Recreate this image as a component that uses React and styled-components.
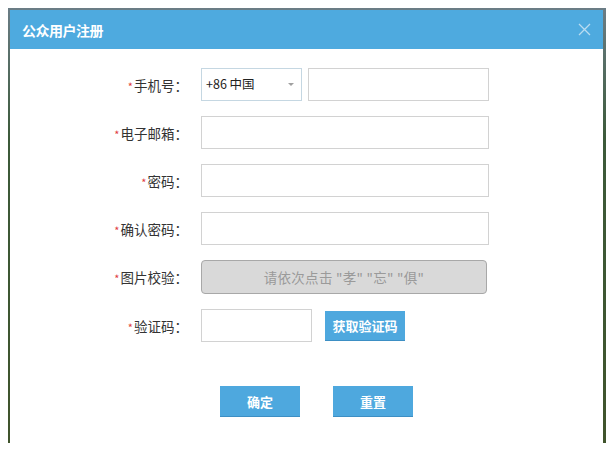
import React from "react";
import styled, { createGlobalStyle } from "styled-components";

const GlobalStyle = createGlobalStyle`
  html, body {
    margin: 0;
    padding: 0;
    background: #fff;
  }
  body {
    font-family: "Noto Sans CJK SC", "Liberation Sans", sans-serif;
    color: #333;
  }
`;

const Backdrop = styled.div`
  margin: 8px 0 0 8px;
  width: 598px;
  height: 435px;
  padding: 2px 3px 0 2px;
  box-sizing: border-box;
  background: linear-gradient(180deg, #6b7d86 0%, #3c5a3a 30%, #40542c 100%);
`;

const Dialog = styled.div`
  background: #fff;
  height: 100%;
  display: flex;
  flex-direction: column;
`;

const Header = styled.div`
  height: 39px;
  background: #4eaadf;
  display: flex;
  align-items: center;
  justify-content: space-between;
  padding: 0 12px;
`;

const Title = styled.div`
  color: #fff;
  font-size: 14px;
  font-weight: bold;
  letter-spacing: -0.5px;
`;

const Close = styled.svg`
  width: 13px;
  height: 13px;
`;

const Form = styled.div`
  display: flex;
  flex-direction: column;
  gap: 15px;
  padding-top: 19px;
`;

const Row = styled.div`
  display: grid;
  grid-template-columns: 178px auto;
  column-gap: 13px;
  align-items: center;
  height: ${(p) => p.$h || 33}px;
`;

const Label = styled.div`
  text-align: right;
  font-size: 13.5px;
  color: #333;
  white-space: nowrap;
`;

const Star = styled.span`
  color: #e03c3c;
  font-size: 11px;
  margin-right: 1px;
`;

const Fields = styled.div`
  display: flex;
  align-items: center;
  gap: ${(p) => p.$gap || 6}px;
`;

const Input = styled.input`
  width: ${(p) => p.$w}px;
  height: 33px;
  box-sizing: border-box;
  border: 1px solid #d2d2d2;
  background: #fff;
  padding: 0 6px;
  outline: none;
  font-size: 13px;
`;

const Select = styled.div`
  width: 101px;
  height: 33px;
  box-sizing: border-box;
  border: 1px solid #c5d7e2;
  display: flex;
  justify-content: space-between;
  padding: 5px 7px 0 4px;
  font-size: 12.5px;
  color: #222;
`;

const Caret = styled.span`
  width: 0;
  height: 0;
  border-left: 3px solid transparent;
  border-right: 3px solid transparent;
  border-top: 3px solid #a0a0a0;
  margin-top: 9px;
`;

const Captcha = styled.div`
  width: 286px;
  height: 34px;
  box-sizing: border-box;
  background: #d9d9d9;
  border: 1px solid #a8a8a8;
  border-radius: 4px;
  display: flex;
  align-items: center;
  justify-content: center;
  color: #9a9a9a;
  font-size: 13.5px;
  letter-spacing: 0.3px;
`;

const BlueButton = styled.button`
  width: ${(p) => p.$w}px;
  height: ${(p) => p.$h}px;
  border: none;
  border-bottom: 1px solid #3d8fc4;
  background: #4ea8de;
  color: #fff;
  font-family: "Noto Sans CJK SC", sans-serif;
  font-size: 13px;
  font-weight: bold;
  padding: 0;
  cursor: pointer;
`;

const Actions = styled.div`
  display: flex;
  gap: 33px;
  padding: 44px 0 0 210px;
`;

export default function App() {
  return (
    <>
      <GlobalStyle />
      <Backdrop>
        <Dialog>
          <Header>
            <Title>公众用户注册</Title>
            <Close viewBox="0 0 13 13">
              <path d="M1 1 L12 12 M12 1 L1 12" stroke="#b9dcf1" strokeWidth="1.3" />
            </Close>
          </Header>
          <Form>
            <Row>
              <Label><Star>*</Star>手机号：</Label>
              <Fields>
                <Select>
                  <span>+86 中国</span>
                  <Caret />
                </Select>
                <Input $w={181} />
              </Fields>
            </Row>
            <Row>
              <Label><Star>*</Star>电子邮箱：</Label>
              <Fields><Input $w={288} /></Fields>
            </Row>
            <Row>
              <Label><Star>*</Star>密码：</Label>
              <Fields><Input $w={288} type="password" /></Fields>
            </Row>
            <Row>
              <Label><Star>*</Star>确认密码：</Label>
              <Fields><Input $w={288} type="password" /></Fields>
            </Row>
            <Row $h={34}>
              <Label><Star>*</Star>图片校验：</Label>
              <Fields>
                <Captcha>请依次点击 "孝" "忘" "俱"</Captcha>
              </Fields>
            </Row>
            <Row>
              <Label><Star>*</Star>验证码：</Label>
              <Fields $gap={13}>
                <Input $w={111} />
                <BlueButton $w={80} $h={30}>获取验证码</BlueButton>
              </Fields>
            </Row>
          </Form>
          <Actions>
            <BlueButton $w={80} $h={31}>确定</BlueButton>
            <BlueButton $w={80} $h={31}>重置</BlueButton>
          </Actions>
        </Dialog>
      </Backdrop>
    </>
  );
}
